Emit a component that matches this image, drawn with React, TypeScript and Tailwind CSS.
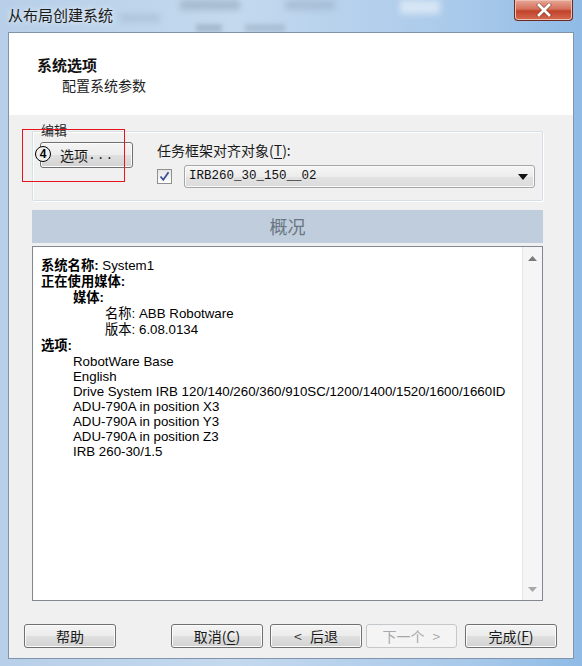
import React from "react";

const cjk = "font-['Noto_Sans_CJK_SC',sans-serif]";
const latin = "font-['Liberation_Sans','Noto_Sans_CJK_SC',sans-serif]";

function WinButton({
  children,
  className = "",
  disabled = false,
}: {
  children: React.ReactNode;
  className?: string;
  disabled?: boolean;
}) {
  return (
    <div
      className={
        "h-[24px] flex items-center justify-center rounded-[3px] border text-[14px] leading-none " +
        (disabled
          ? "border-[#c4c8cb] bg-[#f4f4f4] text-[#a8a8a8] "
          : "border-[#707070] bg-[linear-gradient(#f4f4f4,#ececec_50%,#e0e0e0_50%,#d2d2d2)] text-[#1a1a1a] shadow-[inset_0_0_0_1px_#fbfbfb] ") +
        className
      }
    >
      {children}
    </div>
  );
}

export default function App() {
  const lines: { indent: number; cjk: boolean; node: React.ReactNode }[] = [
    { indent: 0, cjk: true, node: (<><b className="font-bold">系统名称:</b> System1</>) },
    { indent: 0, cjk: true, node: <b className="font-bold">正在使用媒体:</b> },
    { indent: 1, cjk: true, node: <b className="font-bold">媒体:</b> },
    { indent: 2, cjk: true, node: <>名称: ABB Robotware</> },
    { indent: 2, cjk: true, node: <>版本: 6.08.0134</> },
    { indent: 0, cjk: true, node: <b className="font-bold">选项:</b> },
    { indent: 1, cjk: false, node: <>RobotWare Base</> },
    { indent: 1, cjk: false, node: <>English</> },
    { indent: 1, cjk: false, node: <>Drive System IRB 120/140/260/360/910SC/1200/1400/1520/1600/1660ID</> },
    { indent: 1, cjk: false, node: <>ADU-790A in position X3</> },
    { indent: 1, cjk: false, node: <>ADU-790A in position Y3</> },
    { indent: 1, cjk: false, node: <>ADU-790A in position Z3</> },
    { indent: 1, cjk: false, node: <>IRB 260-30/1.5</> },
  ];

  return (
    <div className={"relative w-[582px] h-[666px] overflow-hidden flex flex-col bg-[linear-gradient(90deg,#b7cfe8,#c4d9ee_40%,#a9c9ea_80%,#8fbbe6)] " + cjk}>
      {/* blurred aero background hints */}
      <div className="absolute left-[180px] top-[0px] w-[60px] h-[10px] bg-[#7e8fa4] opacity-40 blur-[3px]" />
      <div className="absolute left-[285px] top-[0px] w-[50px] h-[10px] bg-[#8da0b5] opacity-40 blur-[3px]" />
      <div className="absolute left-[196px] top-[24px] w-[26px] h-[8px] bg-[#7e8fa4] opacity-40 blur-[2px]" />
      <div className="absolute left-[245px] top-[24px] w-[40px] h-[8px] bg-[#8da0b5] opacity-40 blur-[2px]" />
      <div className="absolute left-[120px] top-[14px] w-[40px] h-[8px] bg-[#8da0b5] opacity-30 blur-[3px]" />
      <div className="absolute left-[400px] top-[0px] w-[40px] h-[14px] bg-[#ffffff] opacity-50 blur-[3px]" />

      {/* Title bar */}
      <div className="relative h-[32px] flex items-start justify-between">
        <div className="pl-[8px] pt-[5px] text-[15px] leading-[20px] text-[#1b1b1b] [text-shadow:0_0_6px_#ffffff]">
          从布局创建系统
        </div>
        <div className="mr-[9px] w-[59px] h-[21px] rounded-b-[4px] border border-t-0 border-[#6b2a22] bg-[linear-gradient(#e9a898,#d4715c_45%,#c2432a_55%,#d46a50)] shadow-[inset_0_0_0_1px_#eec0b2] flex items-center justify-center">
          <svg width="16" height="14" viewBox="0 0 16 14">
            <path d="M3 2 L13 12 M13 2 L3 12" stroke="#4a1a12" strokeWidth="4.2" strokeLinecap="square" opacity="0.45" />
            <path d="M3 2 L13 12 M13 2 L3 12" stroke="#ffffff" strokeWidth="2.8" strokeLinecap="square" />
          </svg>
        </div>
      </div>

      {/* Client row */}
      <div className="flex flex-1">
        <div className="w-[8px]" />
        <div className="relative w-[566px] h-[627px] flex flex-col border border-[#8294ab] bg-[#f0f0f0]">
          {/* Header */}
          <div className="h-[82px] bg-white flex flex-col">
            <div className="pl-[28px] pt-[23px] text-[15px] leading-[18px] font-bold text-[#111]">系统选项</div>
            <div className="pl-[53px] pt-[3px] text-[14px] leading-[17px] text-[#222]">配置系统参数</div>
          </div>

          {/* Group box */}
          <div className="relative mt-[16px] ml-[23px] w-[511px] h-[70px] border border-[#d5dfe5] rounded-[2px] shadow-[inset_1px_1px_0_#ffffff,1px_1px_0_#ffffff]">
            <div className="absolute left-[7px] top-[-11px] px-[1px] bg-[#f0f0f0] text-[13px] leading-[18px] text-[#222]">编辑</div>
            <div className="flex pl-[7px] pt-[10px]">
              <WinButton className="w-[93px] h-[26px] justify-start pl-[19px]">
                <span className="tracking-[0px]">选项</span>
                <span className="font-['Liberation_Mono',monospace] text-[13px] tracking-[1px]">...</span>
              </WinButton>
              <div className="ml-[24px] flex flex-col">
                <div className="text-[14px] leading-[16px] text-[#1a1a1a]">
                  任务框架对齐对象(<span className="underline underline-offset-2">T</span>):
                </div>
                <div className="flex items-center mt-[7px]">
                  <div className="w-[15px] h-[15px] border border-[#8e8f8f] bg-[linear-gradient(#e6e6e6,#ffffff)] flex items-center justify-center">
                    <svg width="11" height="11" viewBox="0 0 11 11">
                      <path d="M1.5 5.5 L4.3 8.8 L9.5 1.2" fill="none" stroke="#3c5096" strokeWidth="1.8" />
                    </svg>
                  </div>
                  <div className="ml-[12px] w-[351px] h-[23px] rounded-[3px] border border-[#a6a6a6] bg-[linear-gradient(#f6f6f6,#ececec_50%,#e2e2e2_50%,#dcdcdc)] shadow-[inset_0_0_0_1px_#fafafa] flex items-center justify-between pl-[4px] pr-[6px]">
                    <span className="font-['Liberation_Mono',monospace] text-[12.5px] text-[#111]">IRB260_30_150__02</span>
                    <svg width="10" height="6" viewBox="0 0 10 6">
                      <path d="M0 0 L10 0 L5 6 Z" fill="#111" />
                    </svg>
                  </div>
                </div>
              </div>
            </div>
          </div>

          {/* Overview header */}
          <div className="mt-[9px] ml-[23px] w-[511px] h-[33px] bg-[#bfcddc] flex items-center justify-center text-[18px] text-[#6a7683]">
            概况
          </div>

          {/* Content box */}
          <div className="mt-[3px] ml-[23px] w-[511px] h-[355px] border border-[#828790] bg-white flex">
            <div className={"flex-1 pl-[8px] pt-[11px] text-[13.3px] text-black " + latin}>
              {lines.map((l, i) => (
                <div
                  key={i}
                  className={(l.cjk ? "h-[16px] leading-[16px] " : "h-[15px] leading-[15px] ") + "whitespace-nowrap"}
                  style={{ paddingLeft: l.indent * 32 }}
                >
                  {l.node}
                </div>
              ))}
            </div>
            <div className="w-[20px] bg-[#f5f5f5] border-l border-[#e6e6e6] flex flex-col items-center justify-between pt-[9px] pb-[8px]">
              <svg width="9" height="5" viewBox="0 0 9 5">
                <path d="M0 5 L4.5 0 L9 5 Z" fill="#7a7a7a" />
              </svg>
              <svg width="9" height="5" viewBox="0 0 9 5">
                <path d="M0 0 L9 0 L4.5 5 Z" fill="#a8a8a8" />
              </svg>
            </div>
          </div>

          {/* Buttons */}
          <div className="mt-[23px] flex pl-[15px]">
            <WinButton className="w-[92px]">帮助</WinButton>
            <WinButton className="w-[92px] ml-[55px]">
              取消(<span className="underline underline-offset-2">C</span>)
            </WinButton>
            <WinButton className="w-[92px] ml-[7px]">
              <span className="mr-[8px] text-[#333]">&lt;</span>后退
            </WinButton>
            <WinButton className="w-[91px] ml-[4px]" disabled>
              下一个<span className="ml-[8px]">&gt;</span>
            </WinButton>
            <WinButton className="w-[92px] ml-[8px]">
              完成(<span className="underline underline-offset-2">F</span>)
            </WinButton>
          </div>

          {/* Annotation overlays */}
          <div className="absolute left-[13px] top-[96px] w-[103px] h-[53px] border border-[#e8141c]" />
          <div className="absolute left-[26px] top-[113px] w-[16px] h-[16px] rounded-full border-[1.5px] border-black bg-[#f0f0f0] flex items-center justify-center text-[12px] leading-none font-bold text-black font-['Liberation_Sans',sans-serif]">
            4
          </div>
        </div>
        <div className="w-[8px]" />
      </div>
      <div className="h-[7px]" />
    </div>
  );
}
